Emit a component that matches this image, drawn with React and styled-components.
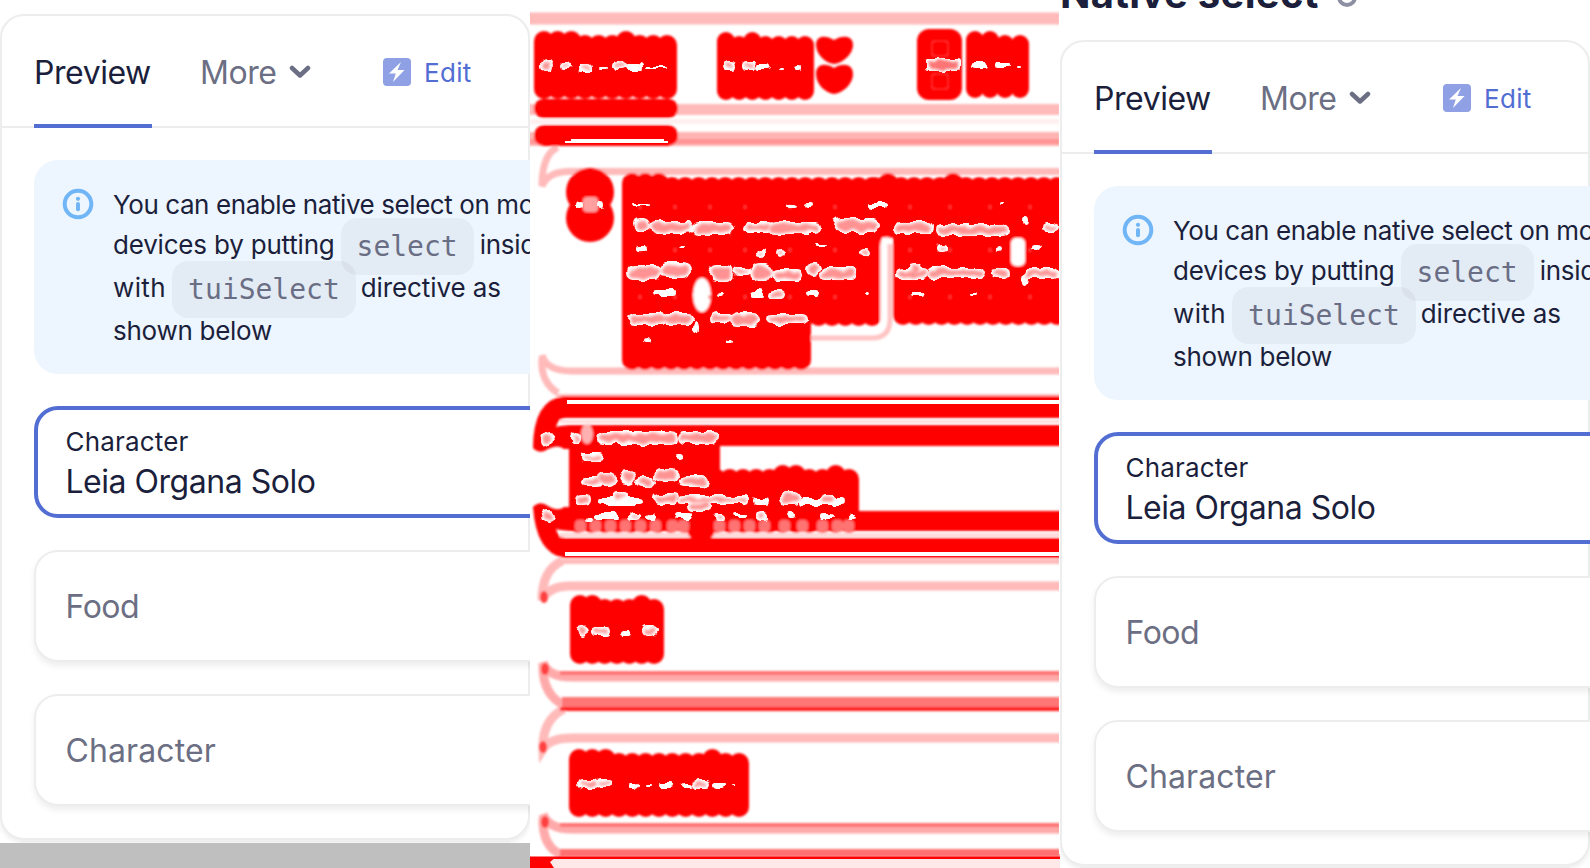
import React from "react";
import styled, { createGlobalStyle } from "styled-components";

const Global = createGlobalStyle`
  body { margin: 0; background: #fff; font-family: Inter, "Liberation Sans", sans-serif; }
  * { box-sizing: border-box; }
`;
const Page = styled.main`
  display: grid; grid-template-columns: 530px 530px 530px;
  width: 1590px; height: 868px; overflow: hidden; background: #fff;
`;
const Pane = styled.section`
  display: flex; flex-direction: column; height: 868px; min-width: 0; overflow: hidden;
  padding-top: ${(p) => (p.$top ? p.$top : 0)}px;
`;
const Text = styled.span`
  white-space: pre; letter-spacing: ${(p) => p.$ls || 0}px;
`;
const Title = styled.h2`
  display: flex; align-items: center; gap: 17px; flex: none;
  height: 40px; margin: -26px 0 26px; padding-left: 0;
  font-size: 40px; line-height: 40px; font-weight: 700; color: #1b1f3b;
`;
const Card = styled.article`
  flex: none; border: 2px solid #ededed; border-radius: 24px; background: #fff;
  box-shadow: 0 3px 5px rgba(0, 0, 0, 0.07);
`;
const Header = styled.header`
  display: flex; align-items: stretch; height: 112px; padding-left: 32px;
  border-bottom: 2px solid #ededed; font-size: 32px;
`;
const Tab = styled.div`
  display: flex; align-items: center; height: 112px; width: ${(p) => p.$w}px;
  margin-right: ${(p) => p.$gap}px; gap: 13px;
  color: ${(p) => (p.$active ? "#1b1f3b" : "#6c6f83")};
  box-shadow: ${(p) => (p.$active ? "inset 0 -4px #526ed3" : "none")};
`;
const Edit = styled.div`
  display: flex; align-items: center; gap: 13px; height: 112px; color: #526ed3; font-size: 26px;
`;
const Body = styled.div`
  display: flex; flex-direction: column; gap: 32px; padding: 32px 0 32px 32px; width: 570px;
`;
const Notice = styled.div`
  display: flex; gap: 19px; height: 214px; padding: 25px 0 0 28px; border-radius: 24px;
  background: #edf5fe; color: #1b1f3b; font-size: 26px;
`;
const NoticeIcon = styled.svg`flex: none; margin-top: 3px;`;
const Line = styled.div`
  height: ${(p) => p.$h}px; line-height: 40px; white-space: pre;
`;
const Chip = styled.code`
  padding: 12px 16px; margin: 0 ${(p) => p.$mr}px 0 ${(p) => p.$ml}px; border-radius: 16px;
  background: rgba(0, 0, 0, 0.04); color: #6a6e85; vertical-align: -2px;
  font: 28px/0 "DejaVu Sans Mono", monospace;
`;
const Field = styled.div`
  display: flex; flex-direction: column; justify-content: center; height: 112px; border-radius: 24px;
  border: ${(p) => (p.$focus ? "4px solid #526ed3" : "2px solid #ededed")};
  padding: ${(p) => (p.$focus ? "4px 0 0 27.500px" : "0 0 0 29.500px")}; background: #fff;
  box-shadow: ${(p) => (p.$focus ? "none" : "0 4px 6px rgba(0,0,0,.07)")};
  color: ${(p) => (p.$focus ? "#1b1f3b" : "#6c6f83")}; font-size: 32px;
`;
const Label = styled.div`font-size: 26px; line-height: 32px; margin-bottom: 4px;`;
const Value = styled.div`line-height: 40px;`;
const Below = styled.div`
  flex: none; height: 3px; margin: 1px 20px 0; border-top: 1px solid #ececec;
`;
const Footer = styled.div`flex: 1; background: #bfbfbf; margin-top: -1px;`;

function DemoCard() {
  return (
    <Card>
      <Header>
        <Tab $active $w={118} $gap={48}><Text $ls={-0.45}>Preview</Text></Tab>
        <Tab $w={112} $gap={71}>
          <Text $ls={-0.45}>More</Text>
          <svg width="22" height="16" viewBox="0 0 22 16" fill="none"><path d="M3 4l8 7.5L19 4" stroke="#6c6f83" strokeWidth="4.500" strokeLinecap="round" strokeLinejoin="round" /></svg>
        </Tab>
        <Edit>
          <svg width="28" height="28" viewBox="0 0 28 28"><rect width="28" height="28" rx="4" fill="#8fa1e4" /><path d="M18 4L6 15.600h6.800L10 24l11.500-12h-7z" fill="#fff" /></svg>
          <Text $ls={0.3}>Edit</Text>
        </Edit>
      </Header>
      <Body>
        <Notice>
          <NoticeIcon width="32" height="32" viewBox="0 0 32 32">
            <circle cx="16" cy="16" r="13.300" fill="none" stroke="#70b6f6" strokeWidth="4" />
            <circle cx="16" cy="10.800" r="2.100" fill="#70b6f6" />
            <path d="M16 16v5.200" stroke="#70b6f6" strokeWidth="4" strokeLinecap="round" />
          </NoticeIcon>
          <div>
            <Line $h={40}><Text $ls={-0.42}>You can enable native select on mobile</Text></Line>
            <Line $h={43}><Text $ls={-0.2}>devices by putting</Text><Chip $ml={6} $mr={6}>select</Chip><Text $ls={-0.3}>inside</Text></Line>
            <Line $h={43}><Text $ls={0.4}>with</Text><Chip $ml={6} $mr={5}>tuiSelect</Chip><Text $ls={-0.1}>directive as</Text></Line>
            <Line $h={40}><Text $ls={-0.27}>shown below</Text></Line>
          </div>
        </Notice>
        <Field $focus>
          <Label><Text $ls={0.17}>Character</Text></Label>
          <Value><Text $ls={-0.48}>Leia Organa Solo</Text></Value>
        </Field>
        <Field><Text $ls={-0.5}>Food</Text></Field>
        <Field><Text $ls={0.1}>Character</Text></Field>
      </Body>
    </Card>
  );
}

// Smudge outline: a solid core with scalloped top and bottom edges
function Smudge({ x, y, w, h, r = 10, lift = [] }) {
  const n = Math.max(1, Math.round((w - 2 * r) / 13));
  const dots = Array.from({ length: n + 1 }, (_, i) => x + r + (i * (w - 2 * r)) / n);
  return (
    <g>
      <rect x={x + 2} y={y + r} width={w - 4} height={h - 2 * r} />
      {dots.map((cx, i) => {
        const up = lift.includes(i) ? 4 : 0;
        return <rect key={i} x={cx - r} y={y + 4 - up} width={2 * r} height={h - 4 + up} rx={r} />;
      })}
    </g>
  );
}

const specks = [
  [10, 60, 14, 11], [28, 62, 14, 8], [48, 64, 15, 8], [70, 67, 9, 2], [82, 60, 13, 10], [94, 64, 18, 7], [116, 67, 22, 2],
  [193, 61, 13, 9], [212, 61, 14, 9], [226, 64, 13, 6], [248, 67, 4, 2], [264, 65, 8, 6],
  [441, 62, 16, 6], [466, 63, 13, 5], [485, 65, 5, 2],
  [46, 201, 7, 8], [68, 201, 6, 8],
  [103, 204, 16, 2], [257, 204, 10, 4], [274, 203, 9, 4], [340, 203, 16, 5], [470, 203, 4, 3],
  [103, 218, 18, 14], [120, 221, 43, 13], [162, 222, 42, 13], [213, 223, 29, 9], [238, 222, 53, 12], [303, 218, 47, 15], [364, 222, 38, 12], [405, 224, 73, 12], [492, 216, 6, 9], [511, 223, 18, 9],
  [107, 246, 11, 5], [149, 246, 7, 3], [226, 249, 9, 8], [246, 248, 9, 10], [285, 245, 12, 2], [328, 247, 14, 10], [407, 244, 10, 8], [466, 247, 6, 6], [502, 245, 8, 5],
  [97, 266, 35, 14], [128, 262, 33, 16], [179, 265, 25, 17], [204, 267, 17, 8], [220, 263, 24, 18], [242, 270, 30, 11], [276, 263, 14, 13], [290, 268, 36, 12], [367, 269, 31, 11], [378, 263, 14, 11], [397, 267, 58, 12], [461, 268, 19, 11], [493, 268, 36, 10], [492, 271, 7, 15],
  [123, 290, 24, 6], [187, 293, 6, 4], [222, 290, 11, 7], [239, 290, 16, 9], [276, 290, 11, 7], [336, 293, 5, 4], [382, 292, 11, 4], [441, 293, 7, 3],
  [98, 313, 38, 12], [131, 313, 33, 11], [163, 323, 6, 11], [180, 313, 23, 11], [200, 312, 31, 15], [236, 314, 42, 11], [114, 337, 6, 5], [195, 339, 7, 3],
  [11, 432, 14, 14], [11, 510, 14, 13], [41, 433, 9, 11], [66, 431, 82, 14], [148, 431, 41, 13], [50, 453, 23, 8], [145, 455, 8, 6],
  [51, 478, 20, 9], [66, 472, 20, 13], [90, 470, 16, 14], [106, 477, 20, 10], [124, 468, 25, 14], [149, 475, 29, 12], [46, 494, 14, 12], [69, 498, 44, 7], [83, 493, 15, 8], [123, 493, 26, 11], [149, 496, 70, 8], [157, 501, 24, 11], [224, 498, 15, 7], [249, 492, 22, 12], [270, 498, 46, 7], [290, 494, 15, 10],
  [55, 519, 8, 4], [64, 513, 25, 6], [98, 513, 13, 8], [116, 513, 9, 7], [145, 513, 17, 6], [184, 513, 13, 8], [203, 513, 14, 4], [226, 513, 11, 8], [259, 513, 6, 5], [290, 514, 13, 5], [319, 515, 7, 4],
  [46, 625, 12, 12], [61, 627, 20, 9], [90, 630, 11, 6], [112, 626, 16, 10],
  [48, 779, 21, 10], [67, 780, 16, 8], [98, 783, 10, 5], [116, 785, 4, 2], [129, 783, 12, 5], [151, 783, 12, 5], [163, 780, 17, 9], [184, 783, 11, 5], [202, 785, 4, 2],
];
const big = specks.filter((s) => s[2] > 7 && s[3] > 7);
const Bar = ({ y, h, c, x = 0 }) => <rect x={x} y={y} width={530 - x} height={h} fill={c} />;

function HeatMap() {
  return (
    <svg width="530" height="868" viewBox="0 0 530 868">
      <defs>
        <filter id="soft" filterUnits="userSpaceOnUse" x="-20" y="-20" width="570" height="908"><feGaussianBlur stdDeviation="1.2" /></filter>
        <filter id="rough" filterUnits="userSpaceOnUse" x="0" y="0" width="530" height="868">
          <feTurbulence type="fractalNoise" baseFrequency="0.11" numOctaves="1" seed="4" result="n" />
          <feDisplacementMap in="SourceGraphic" in2="n" scale="9" xChannelSelector="R" yChannelSelector="G" />
        </filter>
        <filter id="tiny" filterUnits="userSpaceOnUse" x="0" y="0" width="530" height="868">
          <feTurbulence type="fractalNoise" baseFrequency="0.11" numOctaves="1" seed="4" result="n" />
          <feDisplacementMap in="SourceGraphic" in2="n" scale="9" xChannelSelector="R" yChannelSelector="G" />
          <feGaussianBlur stdDeviation="1.600" />
        </filter>
      </defs>
      <rect width="530" height="868" fill="#fff" />
      <g filter="url(#soft)">
        <Bar x={-9} y={12.5} h={12} c="#ffbaba" /><Bar x={-9} y={104} h={11} c="#ffbaba" /><Bar y={119} h={5} c="#fff0f0" />
        <Bar x={-9} y={132} h={14} c="#ffb4b4" /><Bar y={139} h={5} c="#ff9494" />
        <g fill="none" stroke="#ffbaba" strokeWidth="7">
          <path d="M28 147Q12 154 12 186Q18 172 38 171.500H540" />
          <path d="M12 355Q16 371 42 371H540" />
          <path d="M12 358Q10 382 28 393" />
        </g>
        <Bar x={26} y={394} h={3} c="#ffc0c0" />
        <Bar x={26} y={559} h={5} c="#ffbaba" />
        <g fill="none" stroke="#ffaaaa" strokeWidth="9">
          <path d="M32 561Q12 570 12 600Q19 586 40 586H540" stroke="#ffbaba" />
          <path d="M13 662Q17 677 42 677H540" />
          <path d="M13 664Q12 696 36 706" />
          <path d="M34 709Q12 720 13 749Q20 738 42 738H540" stroke="#ffbaba" />
          <path d="M13 814Q18 829 42 829H540" />
          <path d="M13 818Q12 847 32 855" />
        </g>
        <g fill="#ff4040"><ellipse cx="14" cy="597" rx="4" ry="6" /><ellipse cx="15" cy="669" rx="4" ry="6" /><ellipse cx="13" cy="747" rx="4" ry="6" /><ellipse cx="15" cy="822" rx="4" ry="6" /></g>
        <Bar x={30} y={671} h={4} c="#ff7474" /><Bar x={32} y={697} h={10} c="#ff7676" /><Bar x={30} y={707} h={4} c="#ff2222" />
        <Bar x={30} y={823} h={4} c="#ff7474" /><Bar x={30} y={849} h={8} c="#ff7070" />
        <g fill="#f00">
          <Smudge x={4} y={31} w={143} h={68} r={10} lift={[0, 1, 2, 6]} />
          <rect x="4" y="99" width="144" height="19" rx="9" /><rect x="4" y="125" width="144" height="21" rx="10" />
          <Smudge x={187} y={32} w={97} h={68} r={9} lift={[0, 2]} />
          <path d="M286 45c0-10 10-10 18-5 8-5 19-5 19 5 0 9-10 18-19 19-9-1-18-10-18-19z" />
          <path d="M286 74c0-11 10-11 18-6 8-5 19-5 19 6 0 10-10 19-19 20-9-1-18-10-18-20z" />
          <rect x="387" y="29" width="45" height="71" rx="12" />
          <Smudge x={436} y={31} w={63} h={67} r={9} lift={[0, 1]} />
          <circle cx="60" cy="192" r="24" /><circle cx="60" cy="218" r="24" />
          <Smudge x={92} y={173} w={260} h={153} r={10} lift={[0, 1, 2]} />
          <Smudge x={335} y={173} w={215} h={66} r={10} lift={[1, 6]} />
          <Smudge x={363} y={215} w={187} h={110} r={10} />
          <Smudge x={92} y={300} w={189} h={70} r={10} />
          <path d="M540 396H34Q3 400 3 448Q10 455 18 449Q28 444 34 449H45V446H540V425H40Q28 426 26 427Q28 418 36 418H540z" />
          <path d="M540 558H34Q6 553 3 507Q10 500 18 506Q28 512 34 507H45V511H540V531H40Q28 530 26 529Q28 538 36 538H540z" />
          <Smudge x={39} y={427} w={151} h={106} r={9} />
          <Smudge x={150} y={465} w={179} h={68} r={10} lift={[7, 8, 11]} />
          <Smudge x={40} y={595} w={94} h={69} r={10} lift={[0, 1, 5]} />
          <Smudge x={39} y={749} w={180} h={68} r={10} lift={[0, 1, 2, 10]} />
        </g>
        <path d="M350 325V246Q350 237 357 237Q362 237 362 244V320Q360 330 350 334z" fill="#fff" opacity=".9" />
        <path d="M281 338H342Q360 338 360 319V244" stroke="#ffc4c4" strokeWidth="5" fill="none" />
        <ellipse cx="172" cy="295" rx="9" ry="17" fill="#fff" /><rect x="481" y="238" width="14" height="28" rx="5" fill="#fff" />
        <rect x="30" y="420" width="510" height="3" fill="#ffdada" />
        <rect x="30" y="533" width="510" height="4" fill="#ffdada" />
        <g fill="#ff7373">
          {[50, 65, 80, 95, 110, 125, 142, 153, 189, 204, 219, 234, 254, 272, 292, 307, 318].map((x) => <rect key={x} x={x - 5} y="520" width="11" height="12" rx="4" />)}
        </g>
        <ellipse cx="171" cy="533" rx="13" ry="7" fill="#f00" />
        <g fill="#ff5050" opacity=".65">
          {[110, 145, 180, 215, 260, 305, 380, 420, 460, 500].map((x) => <g key={x}><circle cx={x} cy="207" r="2" /><circle cx={x} cy="250" r="2" /><circle cx={x} cy="297" r="2" /></g>)}
        </g>
        <g fill="none" stroke="#ff3030" strokeWidth="1.500"><rect x="402" y="41" width="16" height="15" rx="3" /><rect x="402" y="74" width="16" height="15" rx="3" /></g>
        <rect x="53" y="197" width="15" height="15" rx="4" fill="#ffa0a0" />
        <ellipse cx="57" cy="434" rx="6" ry="10" fill="#ffb0b0" />
      </g>
      <g filter="url(#rough)" fill="#fff">
        {specks.map(([x, y, w, h], i) => <rect key={i} x={x} y={y} width={w} height={h} rx={h / 2} />)}
        <rect x="395" y="59" width="36" height="12" rx="3" />
      </g>
      <g fill="#ff9292" filter="url(#tiny)">
        {big.map(([x, y, w, h], i) => <rect key={i} x={x + 2.5} y={y + 2.5} width={w - 5} height={h - 5} rx={(h - 5) / 2} />)}
        <rect x="398" y="61" width="30" height="8" rx="3" fill="#ff7474" />
      </g>
      <g fill="#fff">
        <path d="M35 141h6v-2h93v2h4v2H35z" /><rect x="37" y="400" width="493" height="4" /><rect x="35" y="552" width="495" height="4" />
      </g>
      <rect y="859" width="530" height="9" fill="#ffe8e8" /><rect y="856.500" width="530" height="2.500" fill="#f00" />
      <path d="M0 857H26L20 862L24 868H0z" fill="#f00" />
      <path d="M529.500 0V854" stroke="#fff" strokeWidth="1" />
    </svg>
  );
}

export default function App() {
  return (
    <Page>
      <Global />
      <Pane $top={14}><DemoCard /><Below /><Footer /></Pane>
      <HeatMap />
      <Pane>
        <Title>
          <Text $ls={0.3}>Native select</Text>
          <svg width="22" height="28" viewBox="0 0 22 28" fill="none" stroke="#8d90a3" strokeWidth="4"><rect x="3" y="3" width="16" height="22" rx="8" /></svg>
        </Title>
        <DemoCard /><Below />
      </Pane>
    </Page>
  );
}
